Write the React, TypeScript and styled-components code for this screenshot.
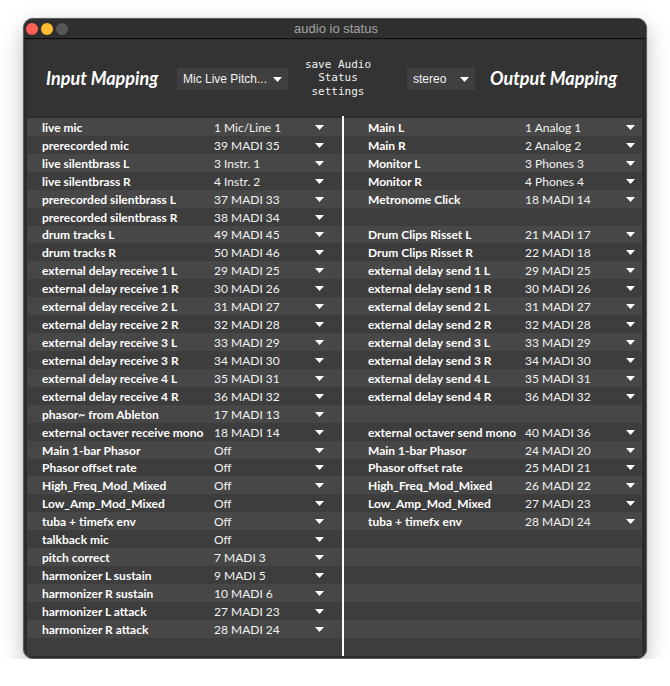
import React from 'react';
import styled, { createGlobalStyle } from 'styled-components';

const GlobalStyle = createGlobalStyle`
  html, body { margin: 0; padding: 0; background: #ffffff; }
  body { font-family: Lato, "Noto Sans", sans-serif; -webkit-font-smoothing: antialiased; }
`;

const Page = styled.div`
  padding: 18px 0 0 23px;
`;

const Window = styled.div`
  box-sizing: border-box;
  width: 624px;
  height: 641px;
  border: 1px solid #5e5e5e;
  border-radius: 10px;
  background: #2c2c2c;
  box-shadow: 0 8px 22px rgba(0, 0, 0, 0.26), 0 0 1px rgba(0, 0, 0, 0.5);
  overflow: hidden;
  display: flex;
  flex-direction: column;
`;

const TitleBar = styled.div`
  box-sizing: border-box;
  height: 20px;
  flex: none;
  background: #2f2f2f;
  border-bottom: 1px solid #0e0e0e;
  display: grid;
  grid-template-columns: 1fr auto 1fr;
  align-items: center;
  padding-left: 2px;
`;

const Lights = styled.div`
  display: flex;
  gap: 3px;
  align-items: center;
`;

const Light = styled.span<{ $c: string }>`
  width: 12px;
  height: 12px;
  border-radius: 50%;
  background: ${(p) => p.$c};
`;

const WindowTitle = styled.div`
  font: 13px "Liberation Sans", Arial, sans-serif;
  color: #a3a3a3;
`;

const Body = styled.div`
  flex: 1;
  display: flex;
  flex-direction: column;
  padding: 1px 4px 2px 3px;
`;

const Header = styled.div`
  height: 76px;
  flex: none;
  background: #333333;
  display: flex;
  align-items: center;
  padding-left: 19px;
`;

const MappingTitle = styled.div<{ $w?: number; $ml?: number }>`
  font: italic 700 18px Lato, sans-serif;
  color: #ffffff;
  white-space: nowrap;
  width: ${(p) => (p.$w ? `${p.$w}px` : 'auto')};
  margin-left: ${(p) => p.$ml ?? 0}px;
`;

const Dropdown = styled.div<{ $w: number; $ml?: number }>`
  box-sizing: border-box;
  width: ${(p) => p.$w}px;
  height: 22px;
  margin-top: 2px;
  margin-left: ${(p) => p.$ml ?? 0}px;
  background: #3f3f3f;
  display: flex;
  align-items: center;
  justify-content: space-between;
  padding: 0 6px 0 6px;
  font: 12px "Liberation Sans", Arial, sans-serif;
  color: #f2f2f2;
  white-space: nowrap;
`;

const SaveText = styled.div`
  width: 100px;
  text-align: center;
  font: 11px "DejaVu Sans Mono", "Liberation Mono", monospace;
  line-height: 13.5px;
  color: #f0f0f0;
`;

const Table = styled.div`
  height: 540px;
  flex: none;
  display: flex;
`;

const Column = styled.div<{ $w: number }>`
  width: ${(p) => p.$w}px;
  flex: none;
  padding-top: 2px;
  display: flex;
  flex-direction: column;
  overflow: hidden;
`;

const Divider = styled.div`
  width: 2px;
  flex: none;
  background: #ffffff;
`;

const Row = styled.div<{ $alt: boolean; $pl: number; $pr: number }>`
  box-sizing: border-box;
  height: 17.93px;
  flex: none;
  display: flex;
  align-items: center;
  padding: 1px ${(p) => p.$pr}px 0 ${(p) => p.$pl}px;
  background: ${(p) => (p.$alt ? '#3d3d3d' : '#474747')};
`;

const Label = styled.div<{ $w: number }>`
  width: ${(p) => p.$w}px;
  flex: none;
  font: 700 12px Lato, sans-serif;
  color: #ffffff;
  white-space: nowrap;
`;

const Value = styled.div`
  flex: 1;
  font: 400 12px Lato, sans-serif;
  color: #f2f2f2;
  white-space: nowrap;
`;

const Arrow = () => (
  <svg width="9" height="5" viewBox="0 0 9 5" style={{ flex: 'none' }}>
    <polygon points="0,0 9,0 4.5,5" fill="#ffffff" />
  </svg>
);

type Entry = [string, string] | null;

const leftRows: Entry[] = [
  ['live mic', '1 Mic/Line 1'],
  ['prerecorded mic', '39 MADI 35'],
  ['live silentbrass L', '3 Instr. 1'],
  ['live silentbrass R', '4 Instr. 2'],
  ['prerecorded silentbrass L', '37 MADI 33'],
  ['prerecorded silentbrass R', '38 MADI 34'],
  ['drum tracks L', '49 MADI 45'],
  ['drum tracks R', '50 MADI 46'],
  ['external delay receive 1 L', '29 MADI 25'],
  ['external delay receive 1 R', '30 MADI 26'],
  ['external delay receive 2 L', '31 MADI 27'],
  ['external delay receive 2 R', '32 MADI 28'],
  ['external delay receive 3 L', '33 MADI 29'],
  ['external delay receive 3 R', '34 MADI 30'],
  ['external delay receive 4 L', '35 MADI 31'],
  ['external delay receive 4 R', '36 MADI 32'],
  ['phasor~ from Ableton', '17 MADI 13'],
  ['external octaver receive mono', '18 MADI 14'],
  ['Main 1-bar Phasor', 'Off'],
  ['Phasor offset rate', 'Off'],
  ['High_Freq_Mod_Mixed', 'Off'],
  ['Low_Amp_Mod_Mixed', 'Off'],
  ['tuba + timefx env', 'Off'],
  ['talkback mic', 'Off'],
  ['pitch correct', '7 MADI 3'],
  ['harmonizer L sustain', '9 MADI 5'],
  ['harmonizer R sustain', '10 MADI 6'],
  ['harmonizer L attack', '27 MADI 23'],
  ['harmonizer R attack', '28 MADI 24'],
  null,
];

const rightRows: Entry[] = [
  ['Main L', '1 Analog 1'],
  ['Main R', '2 Analog 2'],
  ['Monitor L', '3 Phones 3'],
  ['Monitor R', '4 Phones 4'],
  ['Metronome Click', '18 MADI 14'],
  null,
  ['Drum Clips Risset L', '21 MADI 17'],
  ['Drum Clips Risset R', '22 MADI 18'],
  ['external delay send 1 L', '29 MADI 25'],
  ['external delay send 1 R', '30 MADI 26'],
  ['external delay send 2 L', '31 MADI 27'],
  ['external delay send 2 R', '32 MADI 28'],
  ['external delay send 3 L', '33 MADI 29'],
  ['external delay send 3 R', '34 MADI 30'],
  ['external delay send 4 L', '35 MADI 31'],
  ['external delay send 4 R', '36 MADI 32'],
  null,
  ['external octaver send mono', '40 MADI 36'],
  ['Main 1-bar Phasor', '24 MADI 20'],
  ['Phasor offset rate', '25 MADI 21'],
  ['High_Freq_Mod_Mixed', '26 MADI 22'],
  ['Low_Amp_Mod_Mixed', '27 MADI 23'],
  ['tuba + timefx env', '28 MADI 24'],
  null,
  null,
  null,
  null,
  null,
  null,
  null,
];

const MappingColumn = ({
  rows,
  width,
  pl,
  pr,
  labelW,
}: {
  rows: Entry[];
  width: number;
  pl: number;
  pr: number;
  labelW: number;
}) => (
  <Column $w={width}>
    {rows.map((r, i) => (
      <Row key={i} $alt={i % 2 === 1} $pl={pl} $pr={pr}>
        {r && (
          <>
            <Label $w={labelW}>{r[0]}</Label>
            <Value>{r[1]}</Value>
            <Arrow />
          </>
        )}
      </Row>
    ))}
  </Column>
);

export default function App() {
  return (
    <>
      <GlobalStyle />
      <Page>
        <Window>
          <TitleBar>
            <Lights>
              <Light $c="#fe5f57" />
              <Light $c="#febc2e" />
              <Light $c="#575757" />
            </Lights>
            <WindowTitle>audio io status</WindowTitle>
            <div />
          </TitleBar>
          <Body>
            <Header>
              <MappingTitle $w={131}>Input Mapping</MappingTitle>
              <Dropdown $w={111}>
                <span>Mic Live Pitch...</span>
                <Arrow />
              </Dropdown>
              <SaveText>
                save Audio
                <br />
                Status
                <br />
                settings
              </SaveText>
              <Dropdown $w={68} $ml={19}>
                <span>stereo</span>
                <Arrow />
              </Dropdown>
              <MappingTitle $ml={15}>Output Mapping</MappingTitle>
            </Header>
            <Table>
              <MappingColumn rows={leftRows} width={315} pl={15} pr={18} labelW={172} />
              <Divider />
              <MappingColumn rows={rightRows} width={298} pl={24} pr={7} labelW={157} />
            </Table>
          </Body>
        </Window>
      </Page>
    </>
  );
}
